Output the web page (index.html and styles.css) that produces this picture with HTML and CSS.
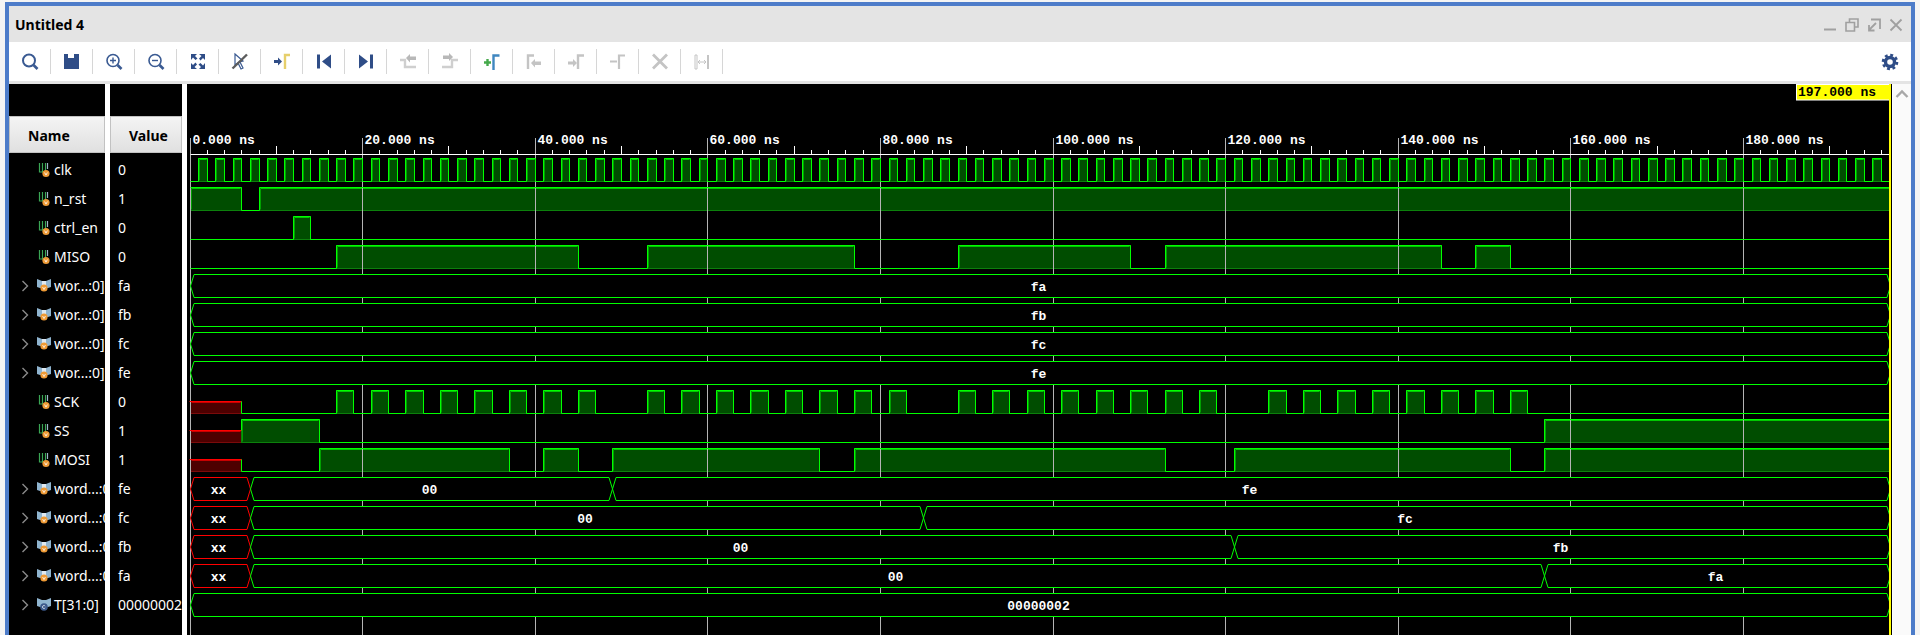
FILE: index.html
```html
<!DOCTYPE html>
<html lang="en">

<head>
    <meta charset="UTF-8">
    <title>Untitled 4</title>
    <link rel="stylesheet" href="styles.css">
</head>

<body>
    <svg class="defs" width="0" height="0">
        <symbol id="sig-scalar" viewBox="0 0 14 16">
            <path d="M2.5 1v9h3V1M8.5 1v9" fill="none" stroke="#3aa655" stroke-width="1.2" />
            <path d="M10.5 1v6" fill="none" stroke="#9fb7c9" stroke-width="1.2" />
            <circle cx="9" cy="11.5" r="3.6" fill="#ee9a35" />
            <path d="M7.6 10.5l1.4 2.6 1.4-2.6" fill="none" stroke="#fff" stroke-width=".8" />
        </symbol>
        <symbol id="sig-bus" viewBox="0 0 14 16">
            <path d="M0 1l5 2h4l5-2v8l-3 1H3L0 9z" fill="#8fb4cf" />
            <path d="M5 3v4h4V3z" fill="#dfe9f1" />
            <circle cx="7" cy="10" r="3.6" fill="#ee9a35" />
            <path d="M5.6 9l1.4 2.6L8.4 9" fill="none" stroke="#fff" stroke-width=".8" />
        </symbol>
        <symbol id="sig-const" viewBox="0 0 14 16">
            <path d="M0 1l5 2h4l5-2v8l-3 1H3L0 9z" fill="#8fb4cf" />
            <circle cx="7" cy="10" r="3.8" fill="#3d5a8c" />
            <path d="M8.2 9.2a1.5 1.5 0 1 0 0 1.6" fill="none" stroke="#dfe9f1" stroke-width=".8" />
        </symbol>
        <symbol id="chev" viewBox="0 0 8 12">
            <path d="M1.5 1l5 5-5 5" fill="none" stroke="#8a8a8a" stroke-width="1.4" />
        </symbol>
    </svg>

    <div class="window">
        <div class="title-bar">
            <span class="title">Untitled 4</span>
            <div class="win-controls">
                <svg width="14" height="14" viewBox="0 0 14 14"><path d="M1 11.5h12" stroke="#a0a0a0" stroke-width="2" /></svg>
                <svg width="14" height="14" viewBox="0 0 14 14"><path d="M4.5 4V1h8.500v8H9.500M1 4.500h8.500v8.500H1z" fill="none" stroke="#a0a0a0" stroke-width="1.6" /></svg>
                <svg width="14" height="14" viewBox="0 0 14 14"><path d="M4 1.500h9V11M2 12l7-7M2 7v5.500h5.500" fill="none" stroke="#a0a0a0" stroke-width="1.800" /></svg>
                <svg width="14" height="14" viewBox="0 0 14 14"><path d="M1.500 1.500l11 11M12.500 1.500l-11 11" stroke="#a0a0a0" stroke-width="1.800" /></svg>
            </div>
        </div>

        <div class="toolbar">
            <div class="tool"><svg width="20" height="20" viewBox="0 0 20 20"><circle cx="9" cy="8.500" r="6" fill="none" stroke="#3a5a92" stroke-width="2" /><path d="M13.500 13l4 4" stroke="#3a5a92" stroke-width="2.600" /></svg></div>
            <div class="tool"><svg width="20" height="20" viewBox="0 0 20 20"><path d="M2 2h15v15H2z" fill="#2f4d87" /><path d="M6 2h7v4H6z" fill="#fff" /><path d="M12 2h2v4h-2z" fill="#2f4d87" /></svg></div>
            <div class="tool"><svg width="20" height="20" viewBox="0 0 20 20"><circle cx="9" cy="8.500" r="6" fill="none" stroke="#3a5a92" stroke-width="1.600" /><path d="M13.500 13l4 4" stroke="#3a5a92" stroke-width="2.600" /><path d="M6 8.500h6M9 5.500v6" stroke="#3a5a92" stroke-width="1.400" /></svg></div>
            <div class="tool"><svg width="20" height="20" viewBox="0 0 20 20"><circle cx="9" cy="8.500" r="6" fill="none" stroke="#3a5a92" stroke-width="1.600" /><path d="M13.500 13l4 4" stroke="#3a5a92" stroke-width="2.600" /><path d="M6 8.500h6" stroke="#3a5a92" stroke-width="1.400" /></svg></div>
            <div class="tool"><svg width="20" height="20" viewBox="0 0 20 20" fill="#2f4d87"><path d="M3 2h6l-2 2 2.500 2.500-2 1.500L5 5.500 3 8zM17 2v6l-2-2-2.500 2.500-1.500-2L13.500 4 11 2zM3 17v-6l2 2 2.500-2.500 1.500 2L6.500 15 9 17zM17 17h-6l2-2-2.500-2.500 2-1.500 2.500 2.500 2-2.500z" /></svg></div>
            <div class="tool"><svg width="20" height="20" viewBox="0 0 20 20"><path d="M5 2l8 7-3 1 3 6-2 1-3-6-3 2z" fill="#fff" stroke="#3a5a92" stroke-width="1.200" /><path d="M2.500 16.500L17 2.500" stroke="#5c5c5c" stroke-width="2.400" /></svg></div>
            <div class="tool"><svg width="20" height="20" viewBox="0 0 20 20"><path d="M2 8h4V5.500l4 4-4 4V11H2z" fill="#2f4d87" /><path d="M13 17V3h5" fill="none" stroke="#e6cf6b" stroke-width="2.400" /></svg></div>
            <div class="tool"><svg width="20" height="20" viewBox="0 0 20 20" fill="#2f4d87"><path d="M3 2.500h3v14H3zM17 2.500v14l-9-7z" /></svg></div>
            <div class="tool"><svg width="20" height="20" viewBox="0 0 20 20" fill="#2f4d87"><path d="M3 2.500v14l9-7zM14 2.500h3v14h-3z" /></svg></div>
            <div class="tool"><svg width="20" height="20" viewBox="0 0 20 20"><path d="M2 8h5v7h11" fill="none" stroke="#cfcfcf" stroke-width="2.400" /><path d="M8 6l4-4v2.500h6v3.500h-6v2.500z" fill="#b8b8b8" /></svg></div>
            <div class="tool"><svg width="20" height="20" viewBox="0 0 20 20"><path d="M2 15h10V8h6" fill="none" stroke="#cfcfcf" stroke-width="2.400" /><path d="M3 3.500h6V1l4 4-4 4V7H3z" fill="#b8b8b8" /></svg></div>
            <div class="tool"><svg width="20" height="20" viewBox="0 0 20 20"><path d="M2 10.500h7M5.500 7v7" stroke="#45a94b" stroke-width="2.400" /><path d="M11.500 18V3.500h6" fill="none" stroke="#3f87c0" stroke-width="2.400" /></svg></div>
            <div class="tool"><svg width="20" height="20" viewBox="0 0 20 20"><path d="M4 17V3.500h6" fill="none" stroke="#c4c4c4" stroke-width="2.400" /><path d="M7 11l4-4v2.500h6v3.500h-6v2.500z" fill="#c4c4c4" /></svg></div>
            <div class="tool"><svg width="20" height="20" viewBox="0 0 20 20"><path d="M12 17V3.500h6" fill="none" stroke="#c4c4c4" stroke-width="2.400" /><path d="M2 9.500h5V7l4 4-4 4v-2.500H2z" fill="#c4c4c4" /></svg></div>
            <div class="tool"><svg width="20" height="20" viewBox="0 0 20 20"><path d="M11 17V3.500h6M2 9.500h7" fill="none" stroke="#c4c4c4" stroke-width="2.200" /></svg></div>
            <div class="tool"><svg width="20" height="20" viewBox="0 0 20 20"><path d="M3 2.500l14 14M17 2.500l-14 14" stroke="#c4c4c4" stroke-width="2.800" /></svg></div>
            <div class="tool"><svg width="20" height="20" viewBox="0 0 20 20"><path d="M3 3h2v14H3z" fill="none" stroke="#c4c4c4" /><path d="M15 3h2v14h-2z" fill="#c4c4c4" /><path d="M6 10h8M8 8l-2 2 2 2M12 8l2 2-2 2" fill="none" stroke="#c4c4c4" /></svg></div>
            <div class="tool-spacer"></div>
            <svg class="gear" width="18" height="18" viewBox="0 0 18 18">
                <circle cx="9" cy="9" r="4.500" fill="none" stroke="#2f4d87" stroke-width="3.400" />
                <circle cx="9" cy="9" r="7" fill="none" stroke="#2f4d87" stroke-width="2.600" stroke-dasharray="2.900 2.600" />
            </svg>
        </div>

        <div class="viewer">
            <div class="col col-name">
                <div class="col-head">Name</div>
                <div class="col-rows">
                    <div class="sig"><span class="no-chev"></span><svg class="sig-icon"><use href="#sig-scalar" /></svg><span>clk</span></div>
                    <div class="sig"><span class="no-chev"></span><svg class="sig-icon"><use href="#sig-scalar" /></svg><span>n_rst</span></div>
                    <div class="sig"><span class="no-chev"></span><svg class="sig-icon"><use href="#sig-scalar" /></svg><span>ctrl_en</span></div>
                    <div class="sig"><span class="no-chev"></span><svg class="sig-icon"><use href="#sig-scalar" /></svg><span>MISO</span></div>
                    <div class="sig"><svg class="chev"><use href="#chev" /></svg><svg class="sig-icon"><use href="#sig-bus" /></svg><span>wor...:0]</span></div>
                    <div class="sig"><svg class="chev"><use href="#chev" /></svg><svg class="sig-icon"><use href="#sig-bus" /></svg><span>wor...:0]</span></div>
                    <div class="sig"><svg class="chev"><use href="#chev" /></svg><svg class="sig-icon"><use href="#sig-bus" /></svg><span>wor...:0]</span></div>
                    <div class="sig"><svg class="chev"><use href="#chev" /></svg><svg class="sig-icon"><use href="#sig-bus" /></svg><span>wor...:0]</span></div>
                    <div class="sig"><span class="no-chev"></span><svg class="sig-icon"><use href="#sig-scalar" /></svg><span>SCK</span></div>
                    <div class="sig"><span class="no-chev"></span><svg class="sig-icon"><use href="#sig-scalar" /></svg><span>SS</span></div>
                    <div class="sig"><span class="no-chev"></span><svg class="sig-icon"><use href="#sig-scalar" /></svg><span>MOSI</span></div>
                    <div class="sig"><svg class="chev"><use href="#chev" /></svg><svg class="sig-icon"><use href="#sig-bus" /></svg><span>word...:0]</span></div>
                    <div class="sig"><svg class="chev"><use href="#chev" /></svg><svg class="sig-icon"><use href="#sig-bus" /></svg><span>word...:0]</span></div>
                    <div class="sig"><svg class="chev"><use href="#chev" /></svg><svg class="sig-icon"><use href="#sig-bus" /></svg><span>word...:0]</span></div>
                    <div class="sig"><svg class="chev"><use href="#chev" /></svg><svg class="sig-icon"><use href="#sig-bus" /></svg><span>word...:0]</span></div>
                    <div class="sig"><svg class="chev"><use href="#chev" /></svg><svg class="sig-icon"><use href="#sig-const" /></svg><span>T[31:0]</span></div>
                </div>
            </div>
            <div class="col col-value">
                <div class="col-head">Value</div>
                <div class="col-rows">
                    <div class="val">0</div>
                    <div class="val">1</div>
                    <div class="val">0</div>
                    <div class="val">0</div>
                    <div class="val">fa</div>
                    <div class="val">fb</div>
                    <div class="val">fc</div>
                    <div class="val">fe</div>
                    <div class="val">0</div>
                    <div class="val">1</div>
                    <div class="val">1</div>
                    <div class="val">fe</div>
                    <div class="val">fc</div>
                    <div class="val">fb</div>
                    <div class="val">fa</div>
                    <div class="val">00000002</div>
                </div>
            </div>
            <svg id="wave" class="wave" width="1705" height="551" viewBox="187 84 1705 551"></svg>
            <div class="scroll">
                <svg width="14" height="10" viewBox="0 0 14 10"><path d="M1.500 8L7 2.500 12.500 8" fill="none" stroke="#a8a8a8" stroke-width="2.400" /></svg>
            </div>
        </div>
    </div>

    <script src="script.js"></script>
</body>

</html>
```

FILE: styles.css
```css
html,
body {
    margin: 0;
    height: 100%;
    overflow: hidden;
}

body {
    background-color: #f4f4f4;
    font-family: "Noto Sans", sans-serif;
}

.defs {
    position: absolute;
}

.window {
    margin: 2px 5px 0;
    height: 633px;
    box-sizing: border-box;
    border: 4px solid #4d7cc9;
    border-bottom: none;
    display: flex;
    flex-direction: column;
}

.title-bar {
    height: 36px;
    background-color: #e4e4e4;
    display: flex;
    justify-content: space-between;
    align-items: center;
    padding: 0 8px 0 6px;
    flex: none;
}

.title {
    font-size: 14px;
    font-weight: bold;
    color: #000;
}

.win-controls {
    display: flex;
    gap: 8px;
    padding-top: 2px;
}

.toolbar {
    height: 39px;
    flex: none;
    background-color: #fff;
    border-bottom: 3px solid #e4e4e4;
    display: flex;
    align-items: center;
}

.tool {
    width: 41px;
    height: 25px;
    border-right: 1px solid #d6d6d6;
    display: flex;
    justify-content: center;
    align-items: center;
    flex: none;
}

.tool-spacer {
    flex: 1;
}

.gear {
    margin-right: 12px;
}

.viewer {
    flex: 1;
    display: flex;
    background-color: #fff;
    min-height: 0;
}

.col {
    background-color: #000;
    padding-top: 32px;
    color: #fff;
    font-size: 14px;
    overflow: hidden;
    flex: none;
}

.col-name {
    width: 96px;
    margin-right: 5px;
}

.col-value {
    width: 72px;
    margin-right: 5px;
}

.col-head {
    height: 37px;
    box-sizing: border-box;
    border: 1px solid #c2c2c2;
    background: linear-gradient(#f4f4f4, #e0e0e0);
    color: #000;
    font-weight: bold;
    display: flex;
    align-items: center;
    padding-top: 2px;
}

.col-name .col-head {
    padding-left: 18px;
}

.col-value .col-head {
    padding-left: 18px;
}

.col-rows {
    padding-top: 2px;
}

.sig,
.val {
    height: 29px;
    display: flex;
    align-items: center;
    white-space: nowrap;
}

.sig {
    padding-left: 12px;
}

.val {
    padding-left: 8px;
}

.chev,
.no-chev {
    width: 8px;
    height: 12px;
    margin-right: 8px;
    flex: none;
}

.sig-icon {
    width: 14px;
    height: 16px;
    margin-right: 3px;
    flex: none;
}

.wave {
    flex: none;
    background-color: #000;
    display: block;
}

.wave text {
    font-family: "Liberation Mono", monospace;
    font-size: 13px;
    font-weight: bold;
    fill: #fff;
}

.wave .cursor-text {
    fill: #000;
}

.scroll {
    flex: 1;
    margin-left: 1px;
    background-color: #fafafa;
    display: flex;
    justify-content: center;
    align-items: flex-start;
    padding-top: 5px;
}
```

FILE: script.js
```js
// waveform viewer drawing, everything in page coordinates (see viewBox)
const svg = document.getElementById('wave');
const NS = 'http://www.w3.org/2000/svg';

const END = 197;
const ROW_TOP = 158.5;
const ROW_PITCH = 29;
const ROW_H = 23;
const GREEN = '#00ff00';
const RED = '#ff0000';

function x(ns) {
    return Math.floor(190 + ns * 8.63) + 0.5;
}

function add(tag, attrs, text) {
    const el = document.createElementNS(NS, tag);
    for (const k in attrs) el.setAttribute(k, attrs[k]);
    if (text) el.textContent = text;
    svg.appendChild(el);
    return el;
}

function line(x1, y1, x2, y2, stroke) {
    add('line', { x1, y1, x2, y2, stroke, 'stroke-width': 1 });
}

function pulses(first, last, step, width) {
    const out = [];
    for (let t = first; t <= last; t += step) out.push(t, t + width);
    return out;
}

// toggles = times where a scalar changes, starting from `start` level
const clkEdges = pulses(1, END - 1, 2, 1).filter(t => t < END);
const sckEdges = [
    ...pulses(17, 45, 4, 2),
    ...pulses(53, 81, 4, 2),
    ...pulses(89, 117, 4, 2),
    ...pulses(125, 153, 4, 2),
];

const scalars = [
    { row: 0, start: 0, edges: clkEdges },
    { row: 1, start: 1, edges: [6, 8] },
    { row: 2, start: 0, edges: [12, 14] },
    { row: 3, start: 0, edges: [17, 45, 53, 77, 89, 109, 113, 145, 149, 153] },
    { row: 8, start: 0, from: 6, edges: sckEdges },
    { row: 9, start: 1, from: 6, edges: [15, 157] },
    { row: 10, start: 0, from: 6, edges: [15, 37, 41, 45, 49, 73, 77, 113, 121, 153, 157] },
];

const buses = [
    { row: 4, segs: [[0, END, 'fa']] },
    { row: 5, segs: [[0, END, 'fb']] },
    { row: 6, segs: [[0, END, 'fc']] },
    { row: 7, segs: [[0, END, 'fe']] },
    { row: 11, segs: [[0, 7, 'xx', true], [7, 49, '00'], [49, END, 'fe']] },
    { row: 12, segs: [[0, 7, 'xx', true], [7, 85, '00'], [85, END, 'fc']] },
    { row: 13, segs: [[0, 7, 'xx', true], [7, 121, '00'], [121, END, 'fb']] },
    { row: 14, segs: [[0, 7, 'xx', true], [7, 157, '00'], [157, END, 'fa']] },
    { row: 15, segs: [[0, END, '00000002']] },
];

// high-level fills go under the grid lines
function drawFills() {
    scalars.forEach(s => {
        const top = ROW_TOP + s.row * ROW_PITCH;
        let level = s.start;
        let t = s.from || 0;
        if (s.from) {
            add('rect', { x: x(0), y: top + 11, width: x(s.from) - x(0), height: 12, fill: '#4d0000', stroke: '#7a0a0a' });
        }
        [...s.edges, END].forEach(edge => {
            if (level) {
                add('rect', { x: x(t), y: top, width: x(edge) - x(t), height: ROW_H, fill: '#004d00', stroke: '#0c800c' });
                line(x(t) + 1, top + 1, x(edge) - 1, top + 1, '#00c800');
                line(x(t) + 1, top + 1, x(t) + 1, top + ROW_H - 1, '#00a000');
            }
            level = 1 - level;
            t = edge;
        });
    });
}

function drawRuler() {
    for (let ns = 0; ns < END; ns += 2) {
        const px = x(ns);
        if (ns % 20 === 0) {
            line(px, 138, px, 635, '#b4b4b4');
            add('text', { x: px + 2, y: 144 }, ns + '.000 ns');
        } else if (ns % 10 === 0) {
            line(px, 146, px, 154, '#fff');
        } else {
            line(px, 150, px, 154, '#fff');
        }
    }
    line(x(0), 154.5, x(END), 154.5, '#fff');
}

function drawBuses() {
    buses.forEach(b => {
        const top = ROW_TOP + b.row * ROW_PITCH;
        const mid = top + ROW_H / 2;
        const bot = top + ROW_H;
        b.segs.forEach(seg => {
            const a = x(seg[0]);
            const e = x(seg[1]);
            const pts = [[a, mid], [a + 3.5, top], [e - 3.5, top], [e, mid], [e - 3.5, bot], [a + 3.5, bot]];
            add('polygon', {
                points: pts.join(' '),
                fill: '#000',
                stroke: seg[3] ? RED : GREEN,
                'stroke-width': 1,
            });
            add('text', { x: (a + e) / 2 - 2, y: top + 16, 'text-anchor': 'middle' }, seg[2]);
        });
    });
}

function drawScalars() {
    scalars.forEach(s => {
        const top = ROW_TOP + s.row * ROW_PITCH;
        const bot = top + ROW_H;
        const yOf = l => (l ? top : bot);
        let level = s.start;
        let pts = [];
        if (s.from) {
            line(x(0) - 1, top + 11, x(s.from), top + 11, RED);
            line(x(0) + 1, top + 12, x(s.from) - 1, top + 12, '#c80000');
            pts.push([x(s.from), top + 11], [x(s.from), yOf(level)]);
        } else {
            pts.push([x(0), yOf(level)]);
        }
        s.edges.forEach(edge => {
            pts.push([x(edge), yOf(level)]);
            level = 1 - level;
            pts.push([x(edge), yOf(level)]);
        });
        pts.push([x(END), yOf(level)]);
        add('polyline', { points: pts.join(' '), fill: 'none', stroke: GREEN, 'stroke-width': 1 });
    });
}

function drawCursor() {
    add('rect', { x: 1796.5, y: 84.5, width: 93, height: 15.5, fill: '#ffff00', stroke: '#fff' });
    add('rect', { x: 1889, y: 84, width: 2, height: 551, fill: '#ffff00' });
    add('text', { x: 1798, y: 96, class: 'cursor-text' }, '197.000 ns');
}

drawFills();
drawRuler();
drawBuses();
drawScalars();
drawCursor();
```
